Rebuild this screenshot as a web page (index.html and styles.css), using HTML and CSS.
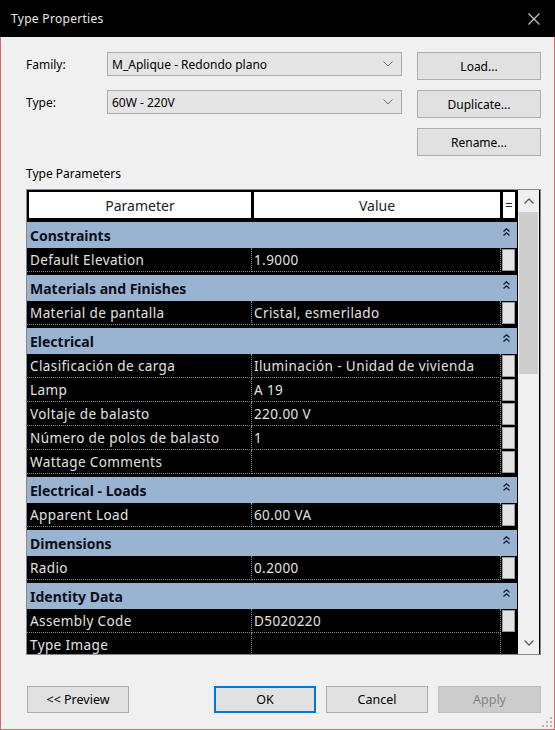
FILE: index.html
```html
<!DOCTYPE html>
<html>
<head>
<meta charset="utf-8">
<link rel="stylesheet" href="styles.css">
</head>
<body>
<div class="window">
  <div class="titlebar">
    <span class="title">Type Properties</span>
    <svg class="close" width="12" height="12" viewBox="0 0 12 12"><path d="M0.5 0.5L11.5 11.5M11.5 0.5L0.5 11.5" stroke="#cfcfcf" stroke-width="1.1" fill="none"/></svg>
  </div>
  <div class="content">
    <div class="top-grid">
      <div class="lbl">Family:</div>
      <div class="combo"><span>M_Aplique - Redondo plano</span><svg width="10" height="6" viewBox="0 0 10 6"><path d="M0.5 0.5L5 5L9.5 0.5" stroke="#707070" fill="none"/></svg></div>
      <div class="btn">Load...</div>
      <div class="lbl">Type:</div>
      <div class="combo"><span>60W - 220V</span><svg width="10" height="6" viewBox="0 0 10 6"><path d="M0.5 0.5L5 5L9.5 0.5" stroke="#707070" fill="none"/></svg></div>
      <div class="btn">Duplicate...</div>
      <div></div>
      <div></div>
      <div class="btn">Rename...</div>
    </div>

    <div class="section-label">Type Parameters</div>

    <div class="table-frame">
      <div class="grid">
        <div class="header">
          <div class="hcell hparam">Parameter</div>
          <div class="hcell hvalue">Value</div>
          <div class="hcell heq">=</div>
        </div>
        <div class="rows">
          <div class="group">
            <div class="ghead"><span>Constraints</span><svg class="dchev" width="7" height="8" viewBox="0 0 7 8"><path d="M0.5 3.5L3.5 0.8L6.5 3.5M0.5 7.5L3.5 4.8L6.5 7.5" stroke="#1a1a2e" stroke-width="1.3" fill="none"/></svg></div>
            <div class="data">
              <div class="row"><div class="p">Default Elevation</div><div class="v">1.9000</div><div class="b"><span class="box"></span></div></div>
            </div>
          </div>
          <div class="group">
            <div class="ghead"><span>Materials and Finishes</span><svg class="dchev" width="7" height="8" viewBox="0 0 7 8"><path d="M0.5 3.5L3.5 0.8L6.5 3.5M0.5 7.5L3.5 4.8L6.5 7.5" stroke="#1a1a2e" stroke-width="1.3" fill="none"/></svg></div>
            <div class="data">
              <div class="row"><div class="p">Material de pantalla</div><div class="v">Cristal, esmerilado</div><div class="b"><span class="box"></span></div></div>
            </div>
          </div>
          <div class="group">
            <div class="ghead"><span>Electrical</span><svg class="dchev" width="7" height="8" viewBox="0 0 7 8"><path d="M0.5 3.5L3.5 0.8L6.5 3.5M0.5 7.5L3.5 4.8L6.5 7.5" stroke="#1a1a2e" stroke-width="1.3" fill="none"/></svg></div>
            <div class="data">
              <div class="row"><div class="p">Clasificación de carga</div><div class="v">Iluminación - Unidad de vivienda</div><div class="b"><span class="box"></span></div></div>
              <div class="row"><div class="p">Lamp</div><div class="v">A 19</div><div class="b"><span class="box"></span></div></div>
              <div class="row"><div class="p">Voltaje de balasto</div><div class="v">220.00 V</div><div class="b"><span class="box"></span></div></div>
              <div class="row"><div class="p">Número de polos de balasto</div><div class="v">1</div><div class="b"><span class="box"></span></div></div>
              <div class="row"><div class="p">Wattage Comments</div><div class="v"></div><div class="b"><span class="box"></span></div></div>
            </div>
          </div>
          <div class="group">
            <div class="ghead"><span>Electrical - Loads</span><svg class="dchev" width="7" height="8" viewBox="0 0 7 8"><path d="M0.5 3.5L3.5 0.8L6.5 3.5M0.5 7.5L3.5 4.8L6.5 7.5" stroke="#1a1a2e" stroke-width="1.3" fill="none"/></svg></div>
            <div class="data">
              <div class="row"><div class="p">Apparent Load</div><div class="v">60.00 VA</div><div class="b"><span class="box"></span></div></div>
            </div>
          </div>
          <div class="group">
            <div class="ghead"><span>Dimensions</span><svg class="dchev" width="7" height="8" viewBox="0 0 7 8"><path d="M0.5 3.5L3.5 0.8L6.5 3.5M0.5 7.5L3.5 4.8L6.5 7.5" stroke="#1a1a2e" stroke-width="1.3" fill="none"/></svg></div>
            <div class="data">
              <div class="row"><div class="p">Radio</div><div class="v">0.2000</div><div class="b"><span class="box"></span></div></div>
            </div>
          </div>
          <div class="group">
            <div class="ghead"><span>Identity Data</span><svg class="dchev" width="7" height="8" viewBox="0 0 7 8"><path d="M0.5 3.5L3.5 0.8L6.5 3.5M0.5 7.5L3.5 4.8L6.5 7.5" stroke="#1a1a2e" stroke-width="1.3" fill="none"/></svg></div>
            <div class="data">
              <div class="row"><div class="p">Assembly Code</div><div class="v">D5020220</div><div class="b"><span class="box"></span></div></div>
              <div class="row"><div class="p plain">Type Image</div><div class="v"></div><div class="b"></div></div>
            </div>
          </div>
        </div>
      </div>
      <div class="scrollbar">
        <div class="sb-btn"><svg width="10" height="6" viewBox="0 0 10 6"><path d="M0.5 5.5L5 1L9.5 5.5" stroke="#606060" stroke-width="1.3" fill="none"/></svg></div>
        <div class="sb-track"><div class="sb-thumb"></div></div>
        <div class="sb-btn"><svg width="10" height="6" viewBox="0 0 10 6"><path d="M0.5 0.5L5 5L9.5 0.5" stroke="#606060" stroke-width="1.3" fill="none"/></svg></div>
      </div>
    </div>

    <div class="footer">
      <div class="btn fbtn">&lt;&lt; Preview</div>
      <div class="fright">
        <div class="btn fbtn ok">OK</div>
        <div class="btn fbtn">Cancel</div>
        <div class="btn fbtn disabled">Apply</div>
      </div>
    </div>
  </div>
  <svg class="grip" width="10" height="10" viewBox="0 0 10 10">
    <rect x="8" y="0" width="2" height="2" fill="#b8b8b8"/>
    <rect x="4" y="4" width="2" height="2" fill="#b8b8b8"/>
    <rect x="8" y="4" width="2" height="2" fill="#b8b8b8"/>
    <rect x="0" y="8" width="2" height="2" fill="#b8b8b8"/>
    <rect x="4" y="8" width="2" height="2" fill="#b8b8b8"/>
    <rect x="8" y="8" width="2" height="2" fill="#b8b8b8"/>
  </svg>
</div>
</body>
</html>
```

FILE: styles.css
```css
* { box-sizing: border-box; }
html, body { margin: 0; padding: 0; }
body {
  width: 555px;
  height: 730px;
  background: #f0f0f0;
  font-family: "Noto Sans", "Open Sans", sans-serif;
  font-size: 12px;
  color: #000;
}
.window {
  position: relative;
  width: 555px;
  height: 730px;
  background: #f0f0f0;
  border: 1px solid #d9686e;
  border-top: none;
  display: flex;
  flex-direction: column;
}
.titlebar {
  height: 37px;
  background: #000;
  display: flex;
  align-items: center;
  justify-content: space-between;
  padding: 0 15px 0 11px;
  margin: 0 -1px;
}
.title {
  color: #e8e8e8;
  font-size: 12px;
  letter-spacing: 0.3px;
}
.close { display: block; }
.content {
  padding: 15px 13px 0 25px;
  display: flex;
  flex-direction: column;
}
.top-grid {
  display: grid;
  grid-template-columns: 81px 295px 139px;
  grid-template-rows: 28px 28px 28px;
  row-gap: 10px;
}
.top-grid .btn { margin-left: 15px; }
.lbl {
  display: flex;
  align-items: center;
  height: 24px;
}
.combo {
  height: 24px;
  background: #e5e5e5;
  border: 1px solid #acacac;
  display: flex;
  align-items: center;
  justify-content: space-between;
  padding: 0 8px 0 4px;
}
.combo svg { display: block; }
.btn {
  background: #e1e1e1;
  border: 1px solid #adadad;
  display: flex;
  align-items: center;
  justify-content: center;
  height: 28px;
}
.section-label {
  margin-top: 10px;
  height: 16px;
  line-height: 16px;
}
.table-frame {
  margin-top: 7px;
  width: 515px;
  height: 466px;
  border: 1px solid #828790;
  display: flex;
  background: #000;
}
.grid {
  width: 490px;
  display: flex;
  flex-direction: column;
  overflow: hidden;
}
.header {
  display: flex;
  background: #000;
  padding: 2px 2px 4px 2px;
  gap: 3px;
  height: 32px;
  flex: none;
}
.hcell {
  background: #fff;
  display: flex;
  align-items: center;
  justify-content: center;
  font-size: 14px;
  color: #222;
}
.hparam { width: 222px; }
.hvalue { width: 246px; }
.heq { width: 12px; font-size: 13px; }
.rows {
  flex: 1;
  overflow: hidden;
  background: #000;
}
.ghead {
  height: 26px;
  background: #99b4d1;
  display: flex;
  align-items: center;
  justify-content: space-between;
  padding: 0 7px 0 3px;
  font-weight: bold;
  font-size: 14px;
  color: #0d0d1a;
}
.dchev { display: block; margin-top: -6px; }
.data {
  padding-bottom: 3px;
  background: #000;
}
.row {
  display: flex;
  height: 24px;
  color: #e2e2e2;
  font-size: 13.5px;
  letter-spacing: 0.4px;
}
.p, .v {
  display: flex;
  align-items: center;
  border-bottom: 1px dotted #8a8a8a;
  white-space: nowrap;
  overflow: hidden;
}
.p {
  width: 225px;
  padding-left: 3px;
  border-right: 1px dotted #8a8a8a;
}
.v {
  width: 249px;
  padding-left: 2px;
  border-right: 1px dotted #8a8a8a;
}
.b {
  width: 16px;
  display: flex;
  align-items: flex-start;
  padding: 1px 2px 1px 1px;
}
.box {
  display: block;
  width: 13px;
  height: 22px;
  background: #e3e3e3;
  border: 1px solid #9a9a9a;
}
.scrollbar {
  width: 22px;
  background: #f0f0f0;
  display: flex;
  flex-direction: column;
  border-left: 1px solid #000;
}
.sb-btn {
  height: 22px;
  display: flex;
  align-items: center;
  justify-content: center;
  flex: none;
}
.sb-track {
  flex: 1;
  padding: 0 1px;
}
.sb-thumb {
  height: 162px;
  background: #cdcdcd;
}
.footer {
  margin-top: 31px;
  display: flex;
  justify-content: space-between;
  padding-left: 1px;
}
.fright {
  display: flex;
  gap: 10px;
}
.fbtn {
  width: 102px;
  height: 27px;
  font-size: 12.5px;
}
.ok {
  border: 2px solid #0078d7;
  width: 102px;
}
.disabled {
  background: #cccccc;
  border-color: #bfbfbf;
  color: #838383;
  width: 103px;
}
.grip {
  position: absolute;
  right: 2px;
  bottom: 2px;
}
```
